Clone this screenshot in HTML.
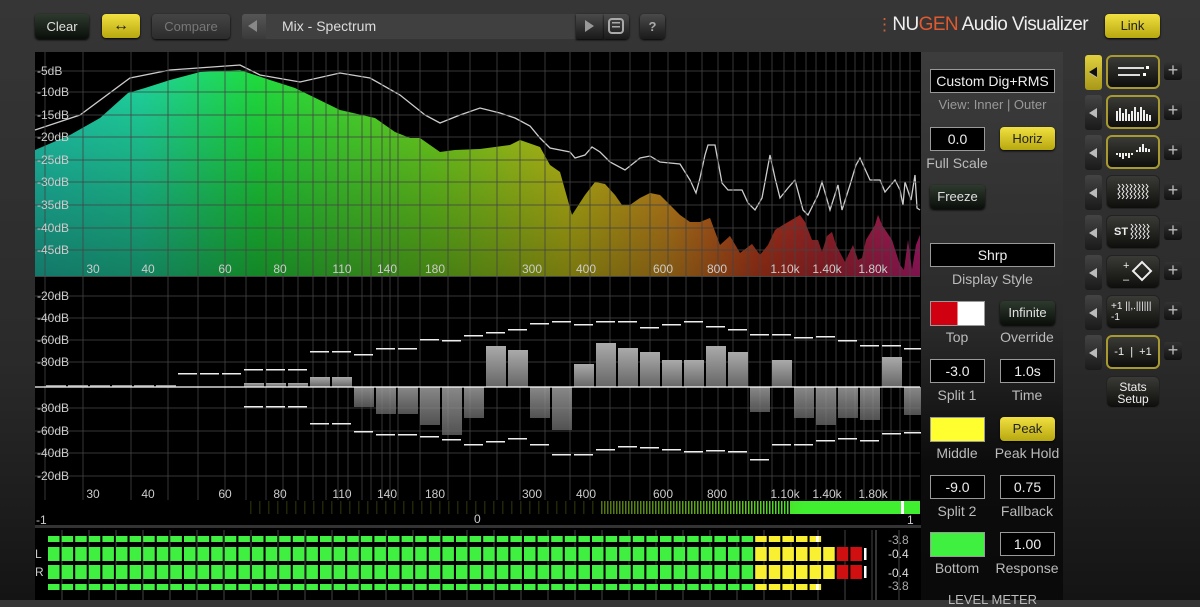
<!DOCTYPE html>
<html><head><meta charset="utf-8"><style>
*{margin:0;padding:0;box-sizing:border-box}
body{width:1200px;height:600px;overflow:hidden;background:linear-gradient(#363636,#2a2a2a 60%,#141414);font-family:"Liberation Sans",sans-serif;position:relative;color:#ddd}
.a{position:absolute}
.btn{position:absolute;border-radius:4px;background:linear-gradient(#4a4a4a,#1a1a1a);color:#ddd;font-size:13px;text-align:center;box-shadow:0 1px 2px #000}
.yb{background:linear-gradient(#f0e040,#b8a810);color:#222}
.gb{background:linear-gradient(#2e3a2e,#0a0e0a);color:#e0e0e0}
.box{position:absolute;background:#000;border:1px solid #999;color:#eee;font-size:14px;text-align:center}
.lbl{position:absolute;font-size:14px;color:#bbb;text-align:center}
.tab{position:absolute;left:1085px;width:17px;height:35px;border-radius:3px;background:linear-gradient(#444,#1a1a1a)}
.tab:after{content:"";position:absolute;left:4px;top:13px;border:5px solid transparent;border-right:8px solid #bbb;border-left:0}
.ib{position:absolute;left:1106px;width:54px;height:34px;border-radius:6px;background:linear-gradient(#3a3a36,#0e0e0c);border:1px solid #222;color:#eee;font-size:11px;text-align:center}
.ib.y{border:2px solid #a89a30}
.pl{position:absolute;left:1164px;width:18px;height:18px;border-radius:3px;background:linear-gradient(#333,#111);color:#bbb;font-size:18px;line-height:17px;text-align:center}
svg text{font-family:"Liberation Sans",sans-serif}
</style></head><body>
<div class="btn gb" style="left:35px;top:14px;width:54px;height:25px;line-height:25px">Clear</div>
<div class="btn yb" style="left:102px;top:14px;width:38px;height:24px;line-height:24px;font-size:16px;font-weight:bold">&#x2194;</div>
<div class="btn" style="left:152px;top:14px;width:78px;height:25px;line-height:25px;color:#777;background:linear-gradient(#444,#2c2c2c)">Compare</div>
<div class="a" style="left:242px;top:14px;width:24px;height:25px;background:linear-gradient(#555,#3a3a3a);border-radius:3px 0 0 3px"></div>
<div class="a" style="left:248px;top:20px;border:6px solid transparent;border-right:9px solid #888;border-left:0"></div>
<div class="a" style="left:266px;top:14px;width:310px;height:25px;background:#404040;color:#ddd;font-size:14px;line-height:25px;padding-left:16px">Mix - Spectrum</div>
<div class="btn" style="left:576px;top:14px;width:28px;height:25px;border-radius:0"></div>
<div class="a" style="left:585px;top:20px;border:6px solid transparent;border-left:9px solid #999;border-right:0"></div>
<div class="btn" style="left:604px;top:14px;width:25px;height:25px;border-radius:0 4px 4px 0"></div>
<div class="a" style="left:608px;top:18px;width:16px;height:16px;border:2px solid #aaa;border-radius:4px;background:repeating-linear-gradient(transparent 0 2px,#aaa 2px 3.5px,transparent 3.5px 4px);background-clip:content-box;padding:2px"></div>
<div class="btn" style="left:640px;top:14px;width:25px;height:25px;line-height:25px;color:#aaa;font-weight:bold">?</div>
<div class="a" style="left:876px;top:14px;font-size:19px;color:#eee;white-space:nowrap;letter-spacing:-0.6px"><span style="color:#d06030;font-size:17px">&#8942;</span>NU<span style="color:#e05a30">GEN</span> Audio Visualizer</div>
<div class="btn yb" style="left:1105px;top:14px;width:55px;height:24px;line-height:24px">Link</div>

<div class="a" style="left:35px;top:52px;width:886px;height:548px;background:#000"></div>
<svg class="a" style="left:0;top:0" width="1200" height="600">
<defs>
<linearGradient id="sg" x1="35" x2="920" y1="0" y2="0" gradientUnits="userSpaceOnUse">
<stop offset="0" stop-color="#20c8b0"/><stop offset="0.12" stop-color="#20d8a0"/><stop offset="0.25" stop-color="#20e040"/><stop offset="0.45" stop-color="#70d820"/><stop offset="0.6" stop-color="#c8c818"/><stop offset="0.72" stop-color="#d89020"/><stop offset="0.82" stop-color="#d04020"/><stop offset="0.9" stop-color="#c02838"/><stop offset="1" stop-color="#d02080"/>
</linearGradient>
<linearGradient id="dk" x1="0" x2="0" y1="60" y2="276" gradientUnits="userSpaceOnUse"><stop offset="0" stop-color="#000" stop-opacity="0"/><stop offset="1" stop-color="#000" stop-opacity="0.4"/></linearGradient>
<linearGradient id="bar" x1="0" x2="0" y1="0" y2="1"><stop offset="0" stop-color="#aaa"/><stop offset="1" stop-color="#666"/></linearGradient>
<linearGradient id="corr" x1="35" x2="920" gradientUnits="userSpaceOnUse"><stop offset="0.6" stop-color="#506010"/><stop offset="0.8" stop-color="#60c020"/><stop offset="0.87" stop-color="#40f030"/><stop offset="1" stop-color="#40f030"/></linearGradient>
</defs>
<g id="spec"></g>
<g id="grid" stroke="#444" stroke-width="1" stroke-opacity="0.8"></g>
<g id="bars"></g>
<g fill="#ccc" font-size="12">
<text x="37" y="75">-5dB</text><text x="37" y="96">-10dB</text><text x="37" y="119">-15dB</text><text x="37" y="141">-20dB</text><text x="37" y="164">-25dB</text><text x="37" y="186">-30dB</text><text x="37" y="209">-35dB</text><text x="37" y="232">-40dB</text><text x="37" y="254">-45dB</text>
<text x="37" y="300">-20dB</text><text x="37" y="322">-40dB</text><text x="37" y="344">-60dB</text><text x="37" y="366">-80dB</text><text x="37" y="412">-80dB</text><text x="37" y="435">-60dB</text><text x="37" y="457">-40dB</text><text x="37" y="480">-20dB</text>
</g>
<g id="fl" fill="#ccc" font-size="12" text-anchor="middle"></g>
<g fill="#ccc" font-size="12"><text x="36" y="524">-1</text><text x="474" y="523">0</text><text x="907" y="524">1</text></g>
<g id="meter"></g>
<g fill="#aaa" font-size="12"><text x="888" y="544">-3.8</text><text x="888" y="558" fill="#ddd">-0.4</text><text x="888" y="577" fill="#ddd">-0.4</text><text x="888" y="590">-3.8</text><text x="35" y="558" fill="#ccc">L</text><text x="35" y="576" fill="#ccc">R</text></g>
</svg>

<div class="a" style="left:921px;top:52px;width:142px;height:548px;background:linear-gradient(#3c3c3c,#2a2a2a 50%,#0c0c0c 75%,#0a0a0a)"></div>
<div class="box" style="left:930px;top:69px;width:125px;height:24px;line-height:22px">Custom Dig+RMS</div>
<div class="lbl" style="left:925px;top:97px;width:135px;color:#999;font-size:13px">View: Inner | Outer</div>
<div class="box" style="left:930px;top:127px;width:55px;height:24px;line-height:22px">0.0</div>
<div class="btn yb" style="left:1000px;top:127px;width:55px;height:23px;line-height:23px">Horiz</div>
<div class="lbl" style="left:922px;top:155px;width:70px">Full Scale</div>
<div class="btn gb" style="left:930px;top:185px;width:55px;height:24px;line-height:24px">Freeze</div>
<div class="box" style="left:930px;top:243px;width:125px;height:24px;line-height:22px">Shrp</div>
<div class="lbl" style="left:925px;top:271px;width:135px">Display Style</div>
<div class="a" style="left:930px;top:301px;width:55px;height:25px;border:1px solid #999;background:linear-gradient(90deg,#d00010 50%,#fff 50%)"></div>
<div class="btn gb" style="left:1000px;top:301px;width:55px;height:24px;line-height:24px">Infinite</div>
<div class="lbl" style="left:922px;top:329px;width:70px">Top</div>
<div class="lbl" style="left:992px;top:329px;width:70px">Override</div>
<div class="box" style="left:930px;top:359px;width:55px;height:24px;line-height:22px">-3.0</div>
<div class="box" style="left:1000px;top:359px;width:55px;height:24px;line-height:22px">1.0s</div>
<div class="lbl" style="left:922px;top:387px;width:70px">Split 1</div>
<div class="lbl" style="left:992px;top:387px;width:70px">Time</div>
<div class="a" style="left:930px;top:417px;width:55px;height:25px;border:1px solid #999;background:#ffff30"></div>
<div class="btn yb" style="left:1000px;top:417px;width:55px;height:24px;line-height:24px">Peak</div>
<div class="lbl" style="left:922px;top:445px;width:70px">Middle</div>
<div class="lbl" style="left:992px;top:445px;width:70px">Peak Hold</div>
<div class="box" style="left:930px;top:475px;width:55px;height:24px;line-height:22px">-9.0</div>
<div class="box" style="left:1000px;top:475px;width:55px;height:24px;line-height:22px">0.75</div>
<div class="lbl" style="left:922px;top:503px;width:70px">Split 2</div>
<div class="lbl" style="left:992px;top:503px;width:70px">Fallback</div>
<div class="a" style="left:930px;top:532px;width:55px;height:25px;border:1px solid #999;background:#40f040"></div>
<div class="box" style="left:1000px;top:532px;width:55px;height:24px;line-height:22px">1.00</div>
<div class="lbl" style="left:922px;top:560px;width:70px">Bottom</div>
<div class="lbl" style="left:992px;top:560px;width:70px">Response</div>
<div class="lbl" style="left:925px;top:592px;width:135px;font-size:13px">LEVEL METER</div>

<div class="tab" style="top:55px;background:linear-gradient(#e0d040,#a89818)"></div>
<div class="a" style="left:1089px;top:67px;border:5px solid transparent;border-right:8px solid #111;border-left:0"></div>
<div class="ib y" style="top:55px"><svg width="50" height="30"><rect x="10" y="10" width="26" height="2" fill="#ddd"/><rect x="38" y="9" width="3" height="3" fill="#fff"/><rect x="10" y="17" width="22" height="2" fill="#ddd"/><rect x="35" y="16" width="3" height="3" fill="#fff"/></svg></div>
<div class="pl" style="top:62px">+</div>
<div class="tab" style="top:95px"></div>
<div class="ib y" style="top:95px"><svg width="50" height="30" fill="#eee"><rect x="8" y="14" width="2" height="10"/><rect x="11" y="11" width="2" height="13"/><rect x="14" y="16" width="2" height="8"/><rect x="17" y="12" width="2" height="12"/><rect x="20" y="17" width="2" height="7"/><rect x="23" y="14" width="2" height="10"/><rect x="26" y="10" width="2" height="14"/><rect x="29" y="15" width="2" height="9"/><rect x="32" y="10" width="2" height="14"/><rect x="35" y="13" width="2" height="11"/><rect x="38" y="17" width="2" height="7"/><rect x="41" y="18" width="2" height="6"/></svg></div>
<div class="pl" style="top:102px">+</div>
<div class="tab" style="top:135px"></div>
<div class="ib y" style="top:135px"><svg width="50" height="30" fill="#eee"><rect x="8" y="16" width="2" height="2"/><rect x="11" y="16" width="2" height="4"/><rect x="14" y="16" width="2" height="6"/><rect x="17" y="16" width="2" height="3"/><rect x="20" y="16" width="2" height="5"/><rect x="23" y="16" width="2" height="2"/><rect x="28" y="13" width="2" height="2"/><rect x="31" y="10" width="2" height="5"/><rect x="34" y="7" width="2" height="8"/><rect x="37" y="11" width="2" height="4"/><rect x="40" y="12" width="2" height="3"/></svg></div>
<div class="pl" style="top:142px">+</div>
<div class="tab" style="top:175px"></div>
<div class="ib" style="top:175px"><svg width="50" height="30" fill="none" stroke="#eee" stroke-width="1"><path d="M10 8l2 2.5-2 2.5 2 2.5-2 2.5 2 2.5-2 2.5M14 8l2 2.5-2 2.5 2 2.5-2 2.5 2 2.5-2 2.5M18 8l2 2.5-2 2.5 2 2.5-2 2.5 2 2.5-2 2.5M22 8l2 2.5-2 2.5 2 2.5-2 2.5 2 2.5-2 2.5M26 8l2 2.5-2 2.5 2 2.5-2 2.5 2 2.5-2 2.5M30 8l2 2.5-2 2.5 2 2.5-2 2.5 2 2.5-2 2.5M34 8l2 2.5-2 2.5 2 2.5-2 2.5 2 2.5-2 2.5M38 8l2 2.5-2 2.5 2 2.5-2 2.5 2 2.5-2 2.5"/></svg></div>
<div class="pl" style="top:182px">+</div>
<div class="tab" style="top:215px"></div>
<div class="ib" style="top:215px"><svg width="50" height="30"><text x="6" y="19" fill="#eee" font-size="11" font-weight="bold">ST</text><path fill="none" stroke="#eee" stroke-width="1" d="M23 8l2 2.5-2 2.5 2 2.5-2 2.5 2 2.5-2 2.5M27 8l2 2.5-2 2.5 2 2.5-2 2.5 2 2.5-2 2.5M31 8l2 2.5-2 2.5 2 2.5-2 2.5 2 2.5-2 2.5M35 8l2 2.5-2 2.5 2 2.5-2 2.5 2 2.5-2 2.5M39 8l2 2.5-2 2.5 2 2.5-2 2.5 2 2.5-2 2.5"/></svg></div>
<div class="pl" style="top:222px">+</div>
<div class="tab" style="top:255px"></div>
<div class="ib" style="top:255px"><svg width="50" height="30"><text x="15" y="13" fill="#eee" font-size="11">+</text><text x="15" y="27" fill="#eee" font-size="11">&#8211;</text><path d="M34 6 L43 15 L34 24 L25 15Z" fill="none" stroke="#eee" stroke-width="2"/></svg></div>
<div class="pl" style="top:262px">+</div>
<div class="tab" style="top:295px"></div>
<div class="ib" style="top:295px;text-align:left;padding-left:4px;font-size:10px;line-height:11px;padding-top:5px">+1 ||,.||||||<br>-1</div>
<div class="pl" style="top:302px">+</div>
<div class="tab" style="top:335px"></div>
<div class="ib y" style="top:335px;line-height:30px;font-size:11px">-1 &nbsp;|&nbsp; +1</div>
<div class="pl" style="top:342px">+</div>
<div class="ib" style="top:376px;height:32px;font-size:12px;line-height:12px;padding-top:4px">Stats<br>Setup</div>

<script>
function P(arr){return arr.map(function(p){return p[0]+','+p[1]}).join(' ')}
var fill=[[35,150],[70,135],[100,118],[128,93],[145,88],[170,80],[200,72],[240,70],[270,80],[295,88],[340,110],[375,118],[395,132],[410,138],[420,138],[440,152],[455,150],[480,149],[510,145],[520,140],[540,147],[550,165],[560,172],[572,215],[585,195],[595,182],[605,184],[615,195],[622,205],[630,205],[640,198],[650,193],[660,195],[670,205],[680,215],[690,222],[700,222],[710,218],[720,245],[730,236],[740,253],[752,244],[760,255],[768,245],[775,230],[783,225],[795,218],[800,215],[805,222],[812,240],[818,240],[822,252],[827,236],[832,232],[836,245],[845,262],[853,245],[858,260],[862,258],[866,240],[875,225],[878,215],[882,225],[892,240],[900,265],[904,270],[908,240],[912,270],[916,245],[920,235],[920,276],[35,276]];
var line=[[35,130],[80,115],[130,78],[170,70],[240,65],[260,75],[300,82],[340,73],[370,78],[400,95],[425,115],[440,123],[460,115],[480,108],[500,113],[515,118],[530,126],[540,138],[550,148],[570,152],[575,158],[585,155],[592,147],[600,152],[610,162],[625,170],[640,158],[650,156],[660,162],[680,164],[690,180],[696,193],[700,178],[705,155],[708,145],[715,145],[722,183],[728,190],[742,190],[748,203],[755,210],[762,198],[770,155],[775,178],[780,198],[788,188],[795,180],[803,210],[808,215],[818,195],[822,182],[830,210],[838,185],[842,210],[850,185],[856,165],[860,158],[870,180],[880,180],[885,192],[895,180],[900,190],[903,205],[905,182],[911,200],[915,175],[917,208],[920,210]];
document.getElementById('spec').innerHTML='<polygon points="'+P(fill)+'" fill="url(#sg)"/><polygon points="'+P(fill)+'" fill="url(#dk)"/><polyline points="'+P(line)+'" fill="none" stroke="#ccc" stroke-width="1.3"/>';
var g='';
var vx=[45,83,131,168,198,225,246,266,283,298,313,326,338,348,362,371,382,390,398,420,448,470,497,520,545,570,590,610,630,650,668,686,702,718,733,748,760,772,784,795,806,816,826,836,846,855,864,873,882,891,900,910];
vx.forEach(function(x){g+='<line x1="'+x+'" y1="52" x2="'+x+'" y2="500"/>'});
[71,92,115,137,160,182,205,228,250].forEach(function(y){g+='<line x1="35" y1="'+y+'" x2="920" y2="'+y+'"/>'});
[296,318,340,362,408,431,453,476].forEach(function(y){g+='<line x1="35" y1="'+y+'" x2="920" y2="'+y+'"/>'});
g+='<line x1="35" y1="276.5" x2="920" y2="276.5" stroke="#555"/>';
document.getElementById('grid').innerHTML=g;
var fq=[['30',93],['40',148],['60',225],['80',280],['110',342],['140',387],['180',435],['300',532],['400',586],['600',663],['800',717],['1.10k',785],['1.40k',827],['1.80k',873]];
var t='';fq.forEach(function(f){t+='<text x="'+f[1]+'" y="273">'+f[0]+'</text><text x="'+f[1]+'" y="498">'+f[0]+'</text>'});
document.getElementById('fl').innerHTML=t;
var C=387;
var B=[[385,0,0],[385,0,0],[385,0,0],[385,0,0],[385,0,0],[385,0,0],[387,373,0],[387,373,0],[387,373,0],[383,369,406],[383,369,406],[383,369,406],[377,351,423],[377,351,423],[407,354,431],[414,348,434],[414,348,434],[425,339,436],[435,340,439],[418,335,444],[346,332,441],[350,329,438],[418,323,444],[430,321,454],[364,324,454],[343,321,449],[348,321,446],[352,327,447],[360,324,449],[360,321,451],[346,326,450],[352,329,451],[412,334,459],[360,334,444],[418,337,444],[425,336,440],[418,340,438],[420,345,440],[357,345,433],[415,348,432]];
var b='';
B.forEach(function(v,i){var x=46+22*i;var y=v[0];
 if(y<C)b+='<rect x="'+x+'" y="'+y+'" width="20" height="'+(C-y)+'" fill="url(#bar)"/>';
 else if(y>C)b+='<rect x="'+x+'" y="'+C+'" width="20" height="'+(y-C)+'" fill="url(#bar)" opacity="0.8"/>';
 if(v[1])b+='<rect x="'+x+'" y="'+v[1]+'" width="19" height="1.5" fill="#eee"/>';
 if(v[2])b+='<rect x="'+x+'" y="'+v[2]+'" width="19" height="1.5" fill="#eee"/>';
});
b+='<line x1="35" y1="387" x2="920" y2="387" stroke="#fff" stroke-width="1.2"/>';
b+='<rect x="35" y="500" width="886" height="26" fill="#000"/>';
for(var x=250;x<920;x+=(x<600?9:(x<790?3:2))){var o=x<600?0.4:1;b+='<rect x="'+x+'" y="501" width="'+(x<790?1.5:2)+'" height="13" fill="url(#corr)" opacity="'+o+'"/>';}
b+='<rect x="795" y="501" width="125" height="13" fill="url(#corr)"/><rect x="901" y="501" width="3" height="13" fill="#fff"/>';
b+='<rect x="35" y="525" width="886" height="3" fill="#333"/>';
document.getElementById('bars').innerHTML=b;
var m='';
for(var x=62;x<900;x+=27)m+='<line x1="'+x+'" y1="530" x2="'+x+'" y2="600" stroke="#444"/>';
m+='<line x1="876" y1="530" x2="876" y2="600" stroke="#666"/>';
function row(y,h,end){for(var x=48;x<end;x+=13.6){var c=x<745?'#40f040':(x<827?'#f8f030':'#d01010');m+='<rect x="'+x+'" y="'+y+'" width="11.5" height="'+h+'" fill="'+c+'"/>';}}
row(536,6,815);row(547,14,855);row(565,14,855);row(584,6,815);
m+='<rect x="816" y="536" width="3" height="6" fill="#fff"/><rect x="816" y="584" width="3" height="6" fill="#fff"/><rect x="864" y="548" width="2.5" height="12" fill="#fff"/><rect x="864" y="566" width="2.5" height="12" fill="#fff"/>';
document.getElementById('meter').innerHTML=m;
</script>
</body></html>
